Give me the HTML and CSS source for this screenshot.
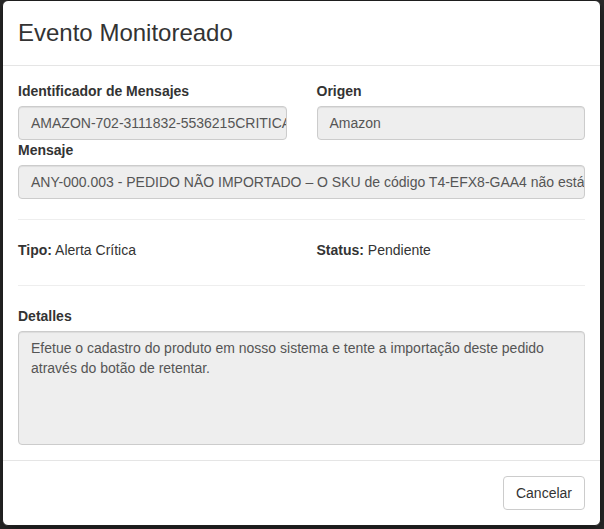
FILE: index.html
```html
<!DOCTYPE html>
<html lang="es">
<head>
<meta charset="utf-8">
<title>Evento Monitoreado</title>
<link rel="stylesheet" href="styles.css">
</head>
<body>
<div class="modal">
  <div class="modal-header">
    <h4 class="modal-title">Evento Monitoreado</h4>
  </div>
  <div class="modal-body">
    <div class="row">
      <div class="col">
        <label class="field-label">Identificador de Mensajes</label>
        <div class="form-control">AMAZON-702-3111832-5536215CRITICA</div>
      </div>
      <div class="col">
        <label class="field-label">Origen</label>
        <div class="form-control">Amazon</div>
      </div>
      <div class="col col-full">
        <label class="field-label">Mensaje</label>
        <div class="form-control">ANY-000.003 - PEDIDO NÃO IMPORTADO – O SKU de código T4-EFX8-GAA4 não está cadastrado no sistema.</div>
      </div>
    </div>
    <hr class="divider">
    <div class="row info-row">
      <div class="col"><span class="info-label">Tipo:</span> Alerta Crítica</div>
      <div class="col"><span class="info-label">Status:</span> Pendiente</div>
    </div>
    <hr class="divider">
    <label class="field-label">Detalles</label>
    <div class="form-control textarea">Efetue o cadastro do produto em nosso sistema e tente a importação deste pedido através do botão de retentar.</div>
  </div>
  <div class="modal-footer">
    <button class="btn" type="button">Cancelar</button>
  </div>
</div>
</body>
</html>
```

FILE: styles.css
```css
* {
  box-sizing: border-box;
}

html, body {
  margin: 0;
  padding: 0;
}

body {
  background: #2b2b2b;
  font-family: "Liberation Sans", Arial, Helvetica, sans-serif;
  font-size: 14px;
  line-height: 20px;
  color: #333;
  height: 529px;
  overflow: hidden;
}

.modal {
  width: 599px;
  margin-left: 2px;
  background: #fff;
  border: 1px solid #1e1e1e;
  border-radius: 6px;
  box-shadow: 0 5px 15px rgba(0, 0, 0, 0.5);
}

.modal-header {
  padding: 15px;
  border-bottom: 1px solid #e5e5e5;
}

.modal-title {
  margin: 0;
  font-size: 24px;
  font-weight: 400;
  line-height: 34px;
  color: #333;
}

.modal-body {
  padding: 15px;
}

.row {
  display: grid;
  grid-template-columns: minmax(0, 1fr) minmax(0, 1fr);
  column-gap: 30px;
}

.col {
  min-width: 0;
}

.col-full {
  grid-column: 1 / -1;
}

.field-label {
  display: block;
  font-weight: 700;
  margin-bottom: 5px;
}

.form-control {
  height: 34px;
  padding: 6px 12px;
  border: 1px solid #ccc;
  border-radius: 4px;
  background: #eee;
  color: #555;
  white-space: nowrap;
  overflow: hidden;
  box-shadow: inset 0 1px 1px rgba(0, 0, 0, 0.075);
}

.form-control.textarea {
  height: 114px;
  white-space: normal;
}

.divider {
  margin: 20px 0;
  border: 0;
  border-top: 1px solid #eee;
  height: 0;
}

.info-row {
  padding-bottom: 5px;
}

.info-label {
  font-weight: 700;
}

.modal-footer {
  padding: 15px;
  border-top: 1px solid #e5e5e5;
  display: flex;
  justify-content: flex-end;
}

.btn {
  height: 34px;
  padding: 6px 12px;
  font-family: inherit;
  font-size: 14px;
  line-height: 20px;
  color: #333;
  background: #fff;
  border: 1px solid #ccc;
  border-radius: 4px;
}
```
